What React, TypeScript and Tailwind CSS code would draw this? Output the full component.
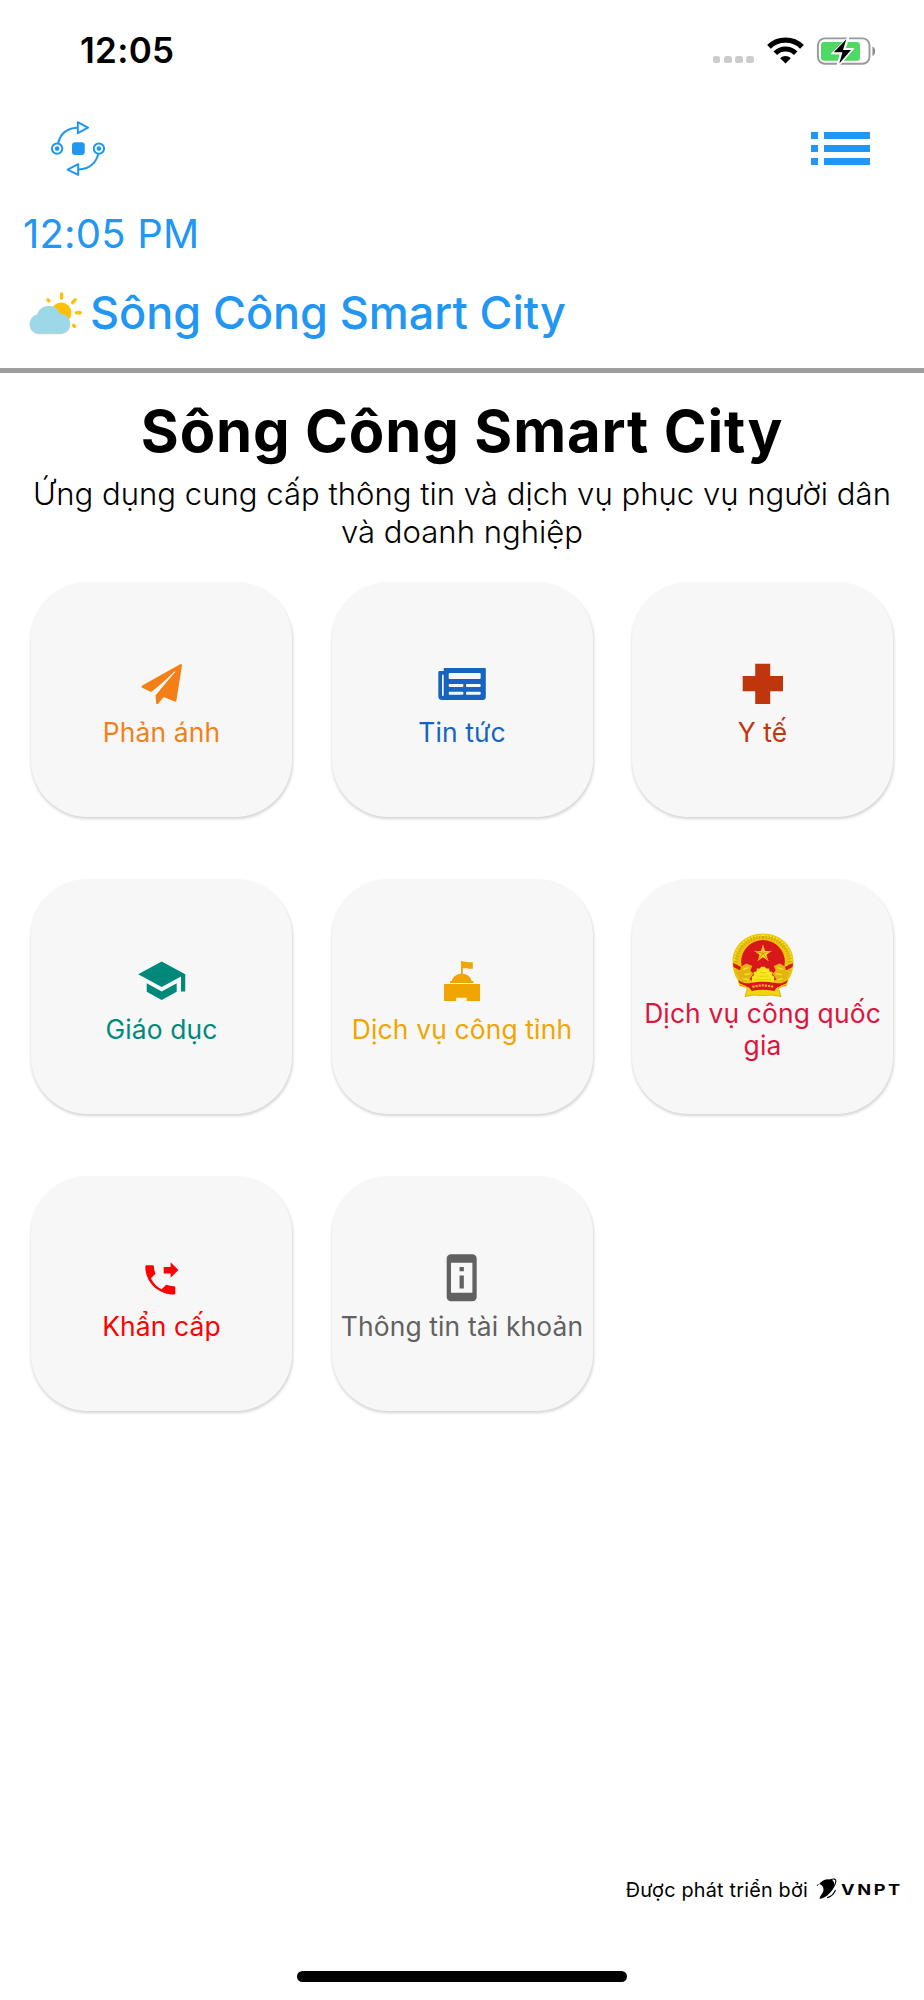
import type { ReactNode } from "react";
import { MdPermDeviceInformation, MdSchool } from "react-icons/md";

type Tile = { label: string; color: string; icon: ReactNode };

function PlaneIcon() {
  return (
    <svg viewBox="0 0 64 64" className="size-16" fill="currentColor" stroke="currentColor" strokeWidth="2.4" strokeLinejoin="round">
      <path d="M50.8 13.2 12.8 34.6 21 38.6 44.6 20 26.8 43.6 27.2 51 33.4 43.6 45.2 48.4Z" />
      <path d="M22.400 40.400 44.8 19.8 25.600 42.400Z" fill="#f7f7f7" stroke="#f7f7f7" strokeWidth="1" />
    </svg>
  );
}

function NewsIcon() {
  return (
    <svg viewBox="0 0 64 64" className="size-16">
      <path
        fill="currentColor"
        d="M14.6 16H55a.8.8 0 0 1 .8.8V45a3 3 0 0 1-3 3H12a3.7 3.7 0 0 1-3.7-3.7V20.4a1.4 1.4 0 0 1 1.4-1.4h4V16.800a.8.8 0 0 1 .9-.8Z"
      />
      <g fill="#f7f7f7">
        <rect x="12" y="22.6" width="1.7" height="21.4" rx=".8" />
        <rect x="18.700" y="21" width="32" height="6" rx="1" />
        <rect x="18.700" y="32" width="14.700" height="3" rx="1" />
        <rect x="36" y="32" width="14.700" height="3" rx="1" />
        <rect x="18.700" y="39.700" width="14.700" height="3" rx="1" />
        <rect x="36" y="39.700" width="14.700" height="3" rx="1" />
      </g>
    </svg>
  );
}

function CrossIcon() {
  return (
    <svg viewBox="0 0 64 64" className="size-16" fill="currentColor">
      <path d="M24.2 11.700h15V24H52v15.200H39.200V52h-15V39.200H11.700V24h12.500Z" />
    </svg>
  );
}

function CityHallIcon() {
  return (
    <svg viewBox="0 0 64 64" className="size-16" fill="currentColor">
      <path d="M14 35h36v17H36.700v-3.300H26.200V52H14ZM20 32h1.700c1-4 4.500-7 9.300-7.300V12h1.800v.8c3.200-.6 5 1 10 .4v6.500c-4 .6-6.500-1.200-10-.3v5.300c4.600.4 7.900 3.300 8.900 7.300h1.600v2H20Z" />
    </svg>
  );
}

function PhoneForwardIcon() {
  return (
    <svg viewBox="0 0 64 64" className="size-16" fill="currentColor">
      <path d="M16.700 19.300h5.900c.7 0 1.200.5 1.300 1.200.1 2.300.5 4.500 1.600 7.300L20.900 32.200c2.400 4.900 5.900 8.600 10.700 11.100l4.600-4.600c2.500.9 4.900 1.400 7.600 1.600.9 0 1.500.6 1.500 1.400v5.500c0 .8-.6 1.300-1.500 1.300C27.900 48.500 15.300 36 15.300 20.700c0-.8.6-1.400 1.400-1.400Z" />
      <path d="M40.600 16.300 48.400 24.100 40.600 31.700V27.500H33.700V21H40.600Z" />
    </svg>
  );
}

const STAR = "M30.500 11.500 32.600 17.600H39L33.900 21.400 35.800 27.500 30.500 23.800 25.200 27.500 27.100 21.400 22 17.600H28.400Z";

// Quốc huy
function EmblemIcon() {
  return (
    <svg viewBox="0 0 61 63" className="h-16 w-[62px]">
      <path d="M15.500 53 12.800 62.500 22 61l8.500.6 8.500-.6 9.200 1.500L45.500 53Z" fill="#f2d60c" stroke="#d9a514" strokeWidth=".8" />
      <path d="M30.500.5C13 .5.500 13 .5 28c0 8 2 13.500 5 18l1.500 6 7.500 2.500h32L54 52l1.500-6c3-4.500 5-10 5-18C60.500 13 48 .5 30.500.5Z" fill="#ecc40f" />
      <path
        d="M30.500 4C15.500 4 4 15 4 28c0 7 2.500 13 6 18M30.500 4C45.500 4 57 15 57 28c0 7-2.500 13-6 18"
        fill="none"
        stroke="#d6a60e"
        strokeWidth="4"
        strokeDasharray="1.2 1.6"
      />
      <path d="M30.500 2.200C14.500 2.200 2.400 14 2.400 28M30.500 2.200C46.500 2.200 58.600 14 58.600 28" fill="none" stroke="#f8ea1a" strokeWidth="1.4" strokeDasharray="2 1.3" />
      <circle cx="30.500" cy="28.500" r="21.500" fill="#d9171b" />
      <path d="M1 29.500 10 34v4L1.500 33.500ZM60 29.500 51 34v4l8.500-4.500Z" fill="#d9171b" />
      <path d="M9 33l5-3 6 2.500-2 4.500 3 3-4 6-6 3-5-7ZM52 33l-5-3-6 2.500 2 4.500-3 3 4 6 6 3 5-7Z" fill="#e3b40f" />
      <path d="M11 36l5-2M12 41l6-1M11 45l5 1M50 36l-5-2M49 41l-6-1M50 45l-5 1" stroke="#f6e32a" strokeWidth="1.3" />
      <path d={STAR} fill="#f5d423" />
      <path d="M30.500 11.500V20L22 17.600 30.500 20 25.200 27.500 30.500 20 35.800 27.500 30.500 20 39 17.600" fill="none" stroke="#c98d12" strokeWidth=".6" />
      <path
        d="M19.500 49v-6l2-1.500-.5-3 3-.5.500-3h3l1.200-1.800h3.600L33.500 35h3l.5 3 3 .5-.5 3 2 1.500v6Z"
        fill="#f8e71c"
      />
      <path d="M23 46h15M25 42.500h11M28 39h5" stroke="#dcae12" strokeWidth=".8" strokeDasharray="1.5 .8" />
      <path d="M6 46c5 4 9 4 13 3 7-1.500 16-1.500 23 0 4 1 8 1 13-3l-2.500 6-8 1.500-3 3.500c-7-1.500-15-1.500-22 0l-3-3.500-8-1.500Z" fill="#d9171b" />
      <path d="M20 53c7-1.800 14-1.800 21 0" fill="none" stroke="#efb21a" strokeWidth="2.200" strokeDasharray="2.2 .9" />
      <path d="M7 50l7 3M54 50l-7 3" stroke="#f0cf18" strokeWidth="1.4" />
    </svg>
  );
}

const tiles: Tile[] = [
  { label: "Phản ánh", color: "text-[#f57f17]", icon: <PlaneIcon /> },
  { label: "Tin tức", color: "text-[#1565c0]", icon: <NewsIcon /> },
  { label: "Y tế", color: "text-[#bf360c]", icon: <CrossIcon /> },
  { label: "Giáo dục", color: "text-[#00897b]", icon: <MdSchool size={51.4} /> },
  { label: "Dịch vụ công tỉnh", color: "text-[#f0a500]", icon: <CityHallIcon /> },
  { label: "Dịch vụ công quốc gia", color: "text-[#dc143c]", icon: <EmblemIcon /> },
  { label: "Khẩn cấp", color: "text-[#ff0000]", icon: <PhoneForwardIcon /> },
  { label: "Thông tin tài khoản", color: "text-[#616161]", icon: <MdPermDeviceInformation size={51.4} /> },
];

function TileCard({ tile }: { tile: Tile }) {
  return (
    <div
      className={`flex h-[235px] flex-col items-center justify-center rounded-[57px] bg-[#f7f7f7] px-1 shadow-[0.5px_2px_3px_rgba(0,0,0,0.17)] ${tile.color}`}
    >
      <div className="flex h-16 items-center justify-center">{tile.icon}</div>
      <div className="translate-y-px text-center text-[26.4px] leading-[31.3px] tracking-[0.15px]">{tile.label}</div>
    </div>
  );
}

function StatusBar() {
  return (
    <div className="flex h-[101px] items-center justify-between pr-[48px] pl-[80px]">
      <span className="text-[35px] font-semibold tracking-[0.3px] text-black">12:05</span>
      <div className="flex items-center">
        <div className="mt-[18px] flex gap-[3.5px]">
          {[0, 1, 2, 3].map((i) => (
            <span key={i} className="size-[7.7px] rounded-[2.5px] bg-[#cccccc]" />
          ))}
        </div>
        <svg viewBox="0 0 37 27" className="ml-[13px] h-[27px] w-[37px]" fill="none" stroke="#000">
          <path d="M2 9.800C11 .9 26 .9 35 9.800" strokeWidth="5.2" />
          <path d="M8.300 16.200c5.800-5.600 14.600-5.600 20.400 0" strokeWidth="5" />
          <path d="M18.500 26.500 13.200 21.200c3-2.800 7.600-2.800 10.600 0Z" fill="#000" stroke="none" />
        </svg>
        <svg viewBox="0 0 60 30" className="ml-[12px] h-[30px] w-[60px]">
          <rect x="1.900" y="2.400" width="51.600" height="25.400" rx="7" fill="none" stroke="#999" strokeWidth="1.9" />
          <path d="M56.500 10.500c3.500 1.500 3.500 8 0 9.500Z" fill="#888" />
          <rect x="5" y="6" width="39" height="18.800" rx="3" fill="#4cd964" />
          <path
            d="M33.200.2 15.300 17.800h9L20.800 30h2L37.800 12.600h-8.500L33.200.2Z"
            fill="#fff"
            stroke="#fff"
            strokeWidth="1"
          />
          <path d="M30.300 3.200 17.800 16.200h8.600L23.300 27.600 35 14h-8Z" fill="#000" />
        </svg>
      </div>
    </div>
  );
}

function CycleLogo() {
  return (
    <svg viewBox="50 120 56 57" className="h-[57px] w-[56px]" fill="none" stroke="currentColor" strokeWidth="2" strokeLinejoin="round">
      <circle cx="57.100" cy="148.600" r="5.200" />
      <circle cx="98.900" cy="148.600" r="5.200" />
      <path d="M58.200 143.300C60 134 67 128 77 127.700M98.300 154C96 163 89 169.300 79 169.400" />
      <path d="M77.800 122.200 88 127.600 77.800 133.200ZM78.200 164.200 67.600 169.700 78.200 174.900Z" />
      <g fill="currentColor" stroke="none">
        <circle cx="57.100" cy="148.600" r="2.300" />
        <circle cx="98.900" cy="148.600" r="2.300" />
        <rect x="72" y="142.200" width="12.700" height="12.800" rx="3" />
      </g>
    </svg>
  );
}

function WeatherIcon() {
  return (
    <svg viewBox="28 290 56 46" className="h-[46px] w-[56px]">
      <g stroke="#ffc107" strokeWidth="3.4" strokeLinecap="round">
        <path d="M61.500 294v4M76.500 312.800h3.800M72.600 302.600l2.600-2.900M48 299.900l.8 1M73.600 325.300l1 1.200" />
      </g>
      <circle cx="61.200" cy="312.700" r="10.300" fill="#ffc107" />
      <path
        d="M38.500 334.200a9.400 9.400 0 0 1-1.400-18.600A11.900 11.900 0 0 1 60 315a9.600 9.600 0 0 1 1.300 19.200Z"
        fill="#b5bcbe"
        opacity=".7"
      />
      <path d="M38.500 333.200a9.400 9.400 0 0 1-1.400-18.600A11.900 11.900 0 0 1 60 314a9.600 9.600 0 0 1 1.300 19.200Z" fill="#9bd9e8" />
    </svg>
  );
}

function VnptMark() {
  return (
    <svg viewBox="0 0 22 22" className="h-[22px] w-[22px]">
      <path d="M3.200 6C6 1.500 12 .3 15.800 1.800c3.200 1.700 2.700 6 .7 9.700-2.700 4.500-7.500 8.800-13 9.300.6-3.500 4-5.800 4-9.300 0-3-1.500-4.800-4.300-5.500Z" fill="#000" />
      <path d="M14 2c3.500-1.800 6.500-1.300 5.700 2.200-.8 4-5 9-9.500 12.500M19.500 12c-1.500 4-4.500 6.700-8.500 7.700" fill="none" stroke="#000" strokeWidth="1.1" />
      <path d="M1 8l1.500-2" stroke="#000" strokeWidth=".8" />
    </svg>
  );
}

export default function App() {
  return (
    <div className="flex h-[2000px] w-[924px] flex-col bg-white font-['Inter',sans-serif]">
      <StatusBar />

      <header className="flex flex-col border-b-[5px] border-[#9e9e9e] pb-[14px] text-[#2196f3]">
        <div className="flex h-[95px] items-center justify-between pr-[54px] pl-[50px]">
          <CycleLogo />
          <div className="flex flex-col gap-[6.3px]">
            {[0, 1, 2].map((i) => (
              <div key={i} className="flex gap-[6px]">
                <span className="h-[6.7px] w-[6.7px] bg-[#2196f3]" />
                <span className="h-[6.7px] w-[46.3px] bg-[#2196f3]" />
              </div>
            ))}
          </div>
        </div>
        <div className="flex h-[75px] items-center pl-[23px] text-[40px] tracking-[0.2px]">12:05 PM</div>
        <div className="flex h-[83px] items-center pl-[28px]">
          <WeatherIcon />
          <span className="ml-[6px] text-[45px] font-medium tracking-[-0.05px]">Sông Công Smart City</span>
        </div>
      </header>

      <main className="flex flex-1 flex-col">
        <h1 className="mt-[23px] text-center text-[58px] leading-[70px] font-bold tracking-[0.85px]">Sông Công Smart City</h1>
        <p className="mt-[9px] text-center text-[31.1px] leading-[38px] font-light">
          Ứng dụng cung cấp thông tin và dịch vụ phục vụ người dân
          <br />
          và doanh nghiệp
        </p>
        <div className="mt-[31px] grid grid-cols-3 gap-x-[39.5px] gap-y-[62px] px-[31px]">
          {tiles.map((tile) => (
            <TileCard key={tile.label} tile={tile} />
          ))}
        </div>
      </main>

      <footer className="flex flex-col items-center">
        <div className="flex h-[22px] items-center self-end pr-[23px]">
          <span className="translate-y-[2px] text-[19.8px] tracking-[0.22px]">Được phát triển bởi</span>
          <span className="ml-[8px]">
            <VnptMark />
          </span>
          <span className="ml-[3px] w-[60px]">
            <span className="inline-block origin-left scale-x-[1.3] text-[14px] font-bold tracking-[2px]">VNPT</span>
          </span>
        </div>
        <div className="mt-[71px] mb-[18px] h-[11px] w-[330px] rounded-full bg-black" />
      </footer>
    </div>
  );
}
